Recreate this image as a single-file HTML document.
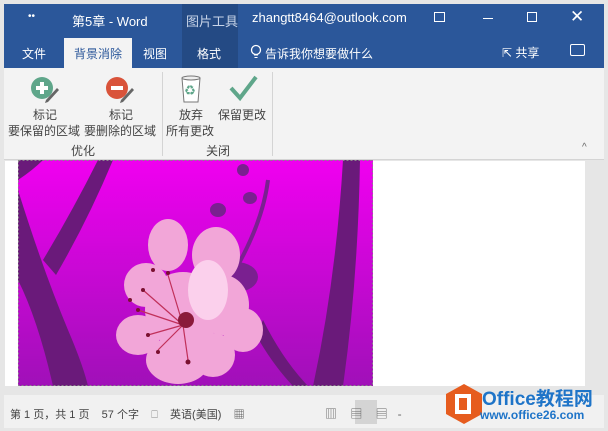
<!DOCTYPE html>
<html><head><meta charset="utf-8"><style>
*{margin:0;padding:0;box-sizing:border-box}
body{width:608px;height:431px;background:#fff;font-family:"Liberation Sans","Noto Sans CJK SC",sans-serif;position:relative;overflow:hidden}
.a{position:absolute;white-space:nowrap}
</style></head><body>
<div class="a" style="left:0;top:0;width:608px;height:431px;background:#e6e6e6"></div>
<div class="a" style="top:4px;left:4px;width:600px;height:64px;background:#2b579a"></div>
<div class="a" style="left:182px;top:4px;width:56px;height:64px;background:#244a84"></div>
<div class="a" style="left:28px;top:11px;color:#fff;font-size:10px">••</div>
<div class="a" style="left:72px;top:11px;color:#fff;font-size:13px">第5章 - Word</div>
<div class="a" style="left:186px;top:11px;color:#c8d4e8;font-size:13px">图片工具</div>
<div class="a" style="left:252px;top:10px;color:#fff;font-size:13px">zhangtt8464@outlook.com</div>
<div class="a" style="left:434px;top:12px;width:11px;height:10px;border:1px solid #fff"></div>
<div class="a" style="left:483px;top:18px;width:10px;height:1px;background:#fff"></div>
<div class="a" style="left:527px;top:12px;width:10px;height:10px;border:1px solid #fff"></div>
<div class="a" style="left:570px;top:7px;color:#fff;font-size:17px">✕</div>
<div class="a" style="left:22px;top:45px;color:#fff;font-size:12px">文件</div>
<div class="a" style="left:64px;top:38px;width:68px;height:31px;background:#f3f3f3"></div>
<div class="a" style="left:74px;top:45px;color:#2b579a;font-size:12px">背景消除</div>
<div class="a" style="left:143px;top:45px;color:#fff;font-size:12px">视图</div>
<div class="a" style="left:197px;top:45px;color:#fff;font-size:12px">格式</div>
<svg class="a" style="left:250px;top:44px" width="12" height="16"><circle cx="6" cy="6" r="4.5" stroke="#fff" fill="none" stroke-width="1.3"/><path d="M4 11 L8 11 M4.5 13.5 L7.5 13.5" stroke="#fff"/></svg>
<div class="a" style="left:265px;top:45px;color:#fff;font-size:12px">告诉我你想要做什么</div>
<div class="a" style="left:502px;top:44px;color:#fff;font-size:12px">⇱ 共享</div>
<div class="a" style="left:570px;top:44px;width:15px;height:12px;border:1px solid #fff;border-radius:2px"></div>
<div class="a" style="left:4px;top:68px;width:600px;height:92px;background:#f3f3f3;border-bottom:1px solid #d4d4d4"></div>
<div class="a" style="left:162px;top:72px;width:1px;height:84px;background:#d4d4d4"></div>
<div class="a" style="left:272px;top:72px;width:1px;height:84px;background:#d4d4d4"></div>
<svg class="a" style="left:30px;top:76px" width="32" height="30"><circle cx="12" cy="12" r="11" fill="#5fa68a"/><path d="M12 6V18M6 12H18" stroke="#fff" stroke-width="4"/><path d="M16 24 L27 12 L29 14 L18 26 L15 27Z" fill="#666"/></svg>
<svg class="a" style="left:105px;top:76px" width="32" height="30"><circle cx="12" cy="12" r="11" fill="#d9533a"/><path d="M6 12H18" stroke="#fff" stroke-width="4"/><path d="M16 24 L27 12 L29 14 L18 26 L15 27Z" fill="#666"/></svg>
<svg class="a" style="left:180px;top:74px" width="22" height="30"><path d="M2 4 H20 L18 28 H4Z" fill="#fff" stroke="#777"/><ellipse cx="11" cy="4" rx="9" ry="2" fill="#eee" stroke="#777"/><text x="5" y="20" font-size="10" fill="#5fa68a">♻</text></svg>
<svg class="a" style="left:228px;top:74px" width="30" height="28"><path d="M3 14 L12 24 L28 3" stroke="#5fa68a" stroke-width="4" fill="none"/></svg>
<div class="a" style="left:33px;top:106px;color:#444;font-size:12px">标记</div>
<div class="a" style="left:8px;top:122px;color:#444;font-size:12px">要保留的区域</div>
<div class="a" style="left:109px;top:106px;color:#444;font-size:12px">标记</div>
<div class="a" style="left:84px;top:122px;color:#444;font-size:12px">要删除的区域</div>
<div class="a" style="left:179px;top:106px;color:#444;font-size:12px">放弃</div>
<div class="a" style="left:166px;top:122px;color:#444;font-size:12px">所有更改</div>
<div class="a" style="left:218px;top:106px;color:#444;font-size:12px">保留更改</div>
<div class="a" style="left:71px;top:142px;color:#444;font-size:12px">优化</div>
<div class="a" style="left:206px;top:142px;color:#444;font-size:12px">关闭</div>
<div class="a" style="left:582px;top:142px;color:#666;font-size:10px">^</div>
<div class="a" style="left:5px;top:161px;width:580px;height:225px;background:#fff"></div>
<div class="a" style="left:585px;top:161px;width:16px;height:225px;background:#e6e6e6"></div>
<svg class="a" style="left:18px;top:160px" width="355" height="226">
<defs><linearGradient id="g" x1="0" y1="0" x2="0" y2="1"><stop offset="0" stop-color="#f000f0"/><stop offset="1" stop-color="#a010b8"/></linearGradient></defs>
<rect width="355" height="226" fill="url(#g)"/>
<path d="M0 30 Q25 110 50 170 Q65 205 70 226 L35 226 Q20 160 0 120Z" fill="#6a1a7a"/>
<path d="M25 100 Q55 50 80 0 L95 0 Q70 60 38 115Z" fill="#6a1a7a"/>
<path d="M0 0 L25 0 Q15 10 0 20Z" fill="#6a1a7a"/>
<path d="M325 0 L342 0 Q340 120 325 226 L295 226 Q318 120 325 0Z" fill="#6a1a7a"/>
<path d="M245 160 Q265 200 290 226 L275 226 Q255 205 238 175Z" fill="#6a1a7a"/>
<ellipse cx="218" cy="117" rx="22" ry="15" fill="#7a2090"/>
<path d="M250 20 Q245 60 220 105" stroke="#7a2090" stroke-width="4" fill="none"/>
<ellipse cx="200" cy="50" rx="8" ry="7" fill="#7a2090"/><ellipse cx="232" cy="38" rx="7" ry="6" fill="#7a2090"/><ellipse cx="225" cy="10" rx="6" ry="6" fill="#7a2090"/>
<g fill="#f2a6d8">
<ellipse cx="150" cy="85" rx="20" ry="26"/>
<ellipse cx="198" cy="95" rx="24" ry="28"/>
<ellipse cx="128" cy="125" rx="22" ry="22"/>
<ellipse cx="205" cy="145" rx="26" ry="30"/>
<ellipse cx="225" cy="170" rx="20" ry="22"/>
<ellipse cx="120" cy="175" rx="22" ry="20"/>
<ellipse cx="160" cy="200" rx="32" ry="24"/>
<ellipse cx="195" cy="195" rx="22" ry="22"/>
<ellipse cx="165" cy="150" rx="38" ry="38"/>
</g>
<ellipse cx="190" cy="130" rx="20" ry="30" fill="#fbd0ec"/>
<path d="M165 165 L125 130 M165 165 L120 150 M165 165 L130 175 M165 165 L150 115 M165 165 L140 190 M165 165 L170 200" stroke="#c0305a" stroke-width="1.2"/>
<circle cx="168" cy="160" r="8" fill="#8a1a3a"/>
<g fill="#7a1030"><circle cx="125" cy="130" r="2"/><circle cx="120" cy="150" r="2"/><circle cx="130" cy="175" r="2"/><circle cx="150" cy="113" r="2"/><circle cx="112" cy="140" r="2"/><circle cx="140" cy="192" r="2"/><circle cx="170" cy="202" r="2.5"/><circle cx="135" cy="110" r="2"/></g>
<rect x="0.5" y="0.5" width="354" height="225" fill="none" stroke="#888" stroke-dasharray="2 2"/>
</svg>
<div class="a" style="left:4px;top:395px;width:600px;height:33px;background:#f1f1f1"></div>
<div class="a" style="left:10px;top:406px;color:#444;font-size:11px">第 1 页，共 1 页&nbsp;&nbsp;&nbsp;&nbsp;57 个字&nbsp;&nbsp;&nbsp;&nbsp;<span style="color:#888">⎕</span>&nbsp;&nbsp;&nbsp;&nbsp;英语(美国)&nbsp;&nbsp;&nbsp;&nbsp;▦</div>
<div class="a" style="left:355px;top:400px;width:22px;height:24px;background:#d4d4d4"></div>
<div class="a" style="left:325px;top:405px;color:#666;font-size:12px">▥&nbsp;&nbsp;&nbsp;&nbsp;▤&nbsp;&nbsp;&nbsp;&nbsp;▤&nbsp;&nbsp;&nbsp;-</div>
<svg class="a" style="left:444px;top:382px" width="40" height="44"><path d="M20 2 L38 12 L38 32 L20 42 L2 32 L2 12Z" fill="#e65c1e"/><rect x="13" y="14" width="12" height="16" fill="none" stroke="#fff" stroke-width="4"/></svg>
<div class="a" style="left:482px;top:384px;color:#1e74c8;font-size:19px;font-weight:bold">Office教程网</div>
<div class="a" style="left:480px;top:408px;color:#1e74c8;font-size:12px;font-weight:bold">www.office26.com</div>
</body></html>
